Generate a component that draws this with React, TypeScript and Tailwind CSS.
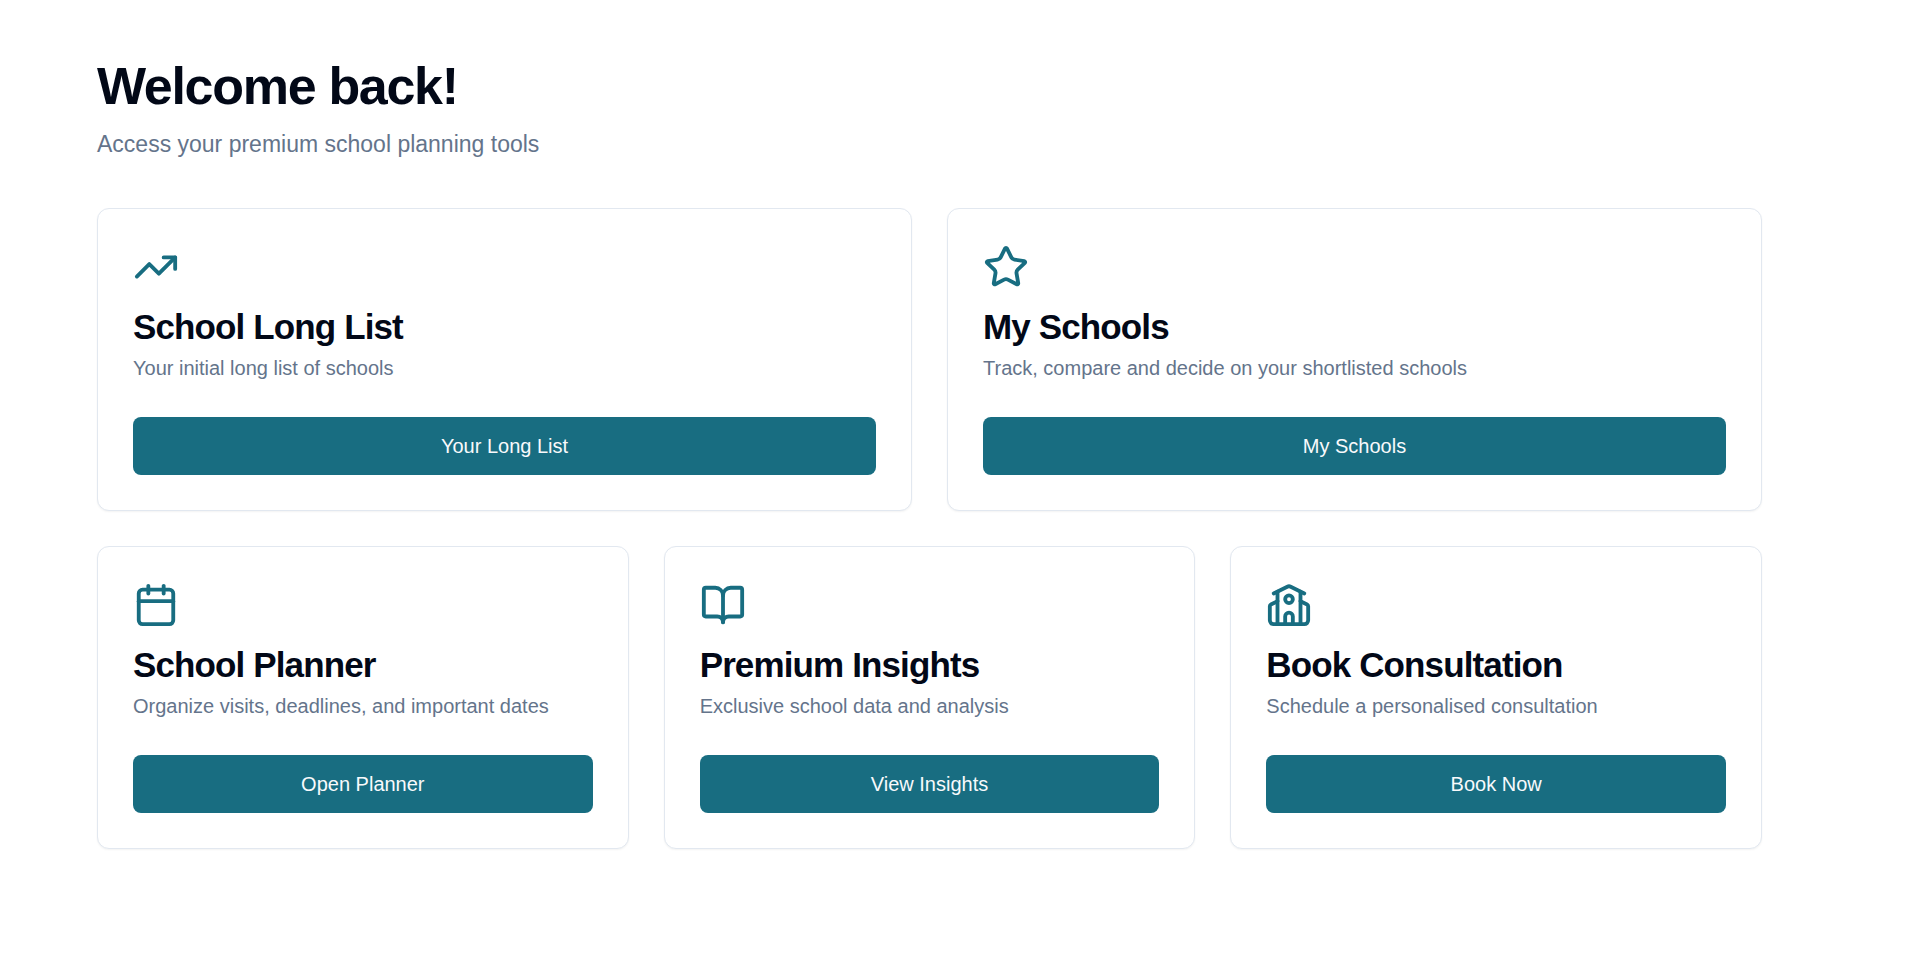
import type { ComponentType } from 'react';
import { BookOpen, Calendar, Star, TrendingUp } from 'lucide-react';

interface Tool {
  title: string;
  description: string;
  action: string;
  icon: ComponentType<{ className?: string }>;
}

function SchoolIcon({ className }: { className?: string }) {
  return (
    <svg
      className={className}
      viewBox="0 0 24 24"
      fill="none"
      stroke="currentColor"
      strokeWidth={2}
      strokeLinecap="round"
      strokeLinejoin="round"
      aria-hidden="true"
    >
      <path d="M14 22v-4a2 2 0 1 0-4 0v4" />
      <path d="m18 10 3.447 1.724a1 1 0 0 1 .553.894V20a2 2 0 0 1-2 2H4a2 2 0 0 1-2-2v-7.382a1 1 0 0 1 .553-.894L6 10" />
      <path d="M18 5v17" />
      <path d="m4 6 7.106-3.553a2 2 0 0 1 1.788 0L20 6" />
      <path d="M6 5v17" />
      <circle cx="12" cy="9" r="2" />
    </svg>
  );
}

const listTools: Tool[] = [
  { title: 'School Long List', description: 'Your initial long list of schools', action: 'Your Long List', icon: TrendingUp },
  { title: 'My Schools', description: 'Track, compare and decide on your shortlisted schools', action: 'My Schools', icon: Star },
];

const planningTools: Tool[] = [
  { title: 'School Planner', description: 'Organize visits, deadlines, and important dates', action: 'Open Planner', icon: Calendar },
  { title: 'Premium Insights', description: 'Exclusive school data and analysis', action: 'View Insights', icon: BookOpen },
  { title: 'Book Consultation', description: 'Schedule a personalised consultation', action: 'Book Now', icon: SchoolIcon },
];

function ToolCard({ tool }: { tool: Tool }) {
  const Icon = tool.icon;
  return (
    <div className="rounded-xl border border-[#e2e8f0] bg-white p-[35px] shadow-xs">
      <Icon className="w-[46px] h-[46px] mb-[19px] text-[#186d81]" />
      <h2 className="text-[35px] leading-[35px] font-semibold tracking-tight">{tool.title}</h2>
      <p className="mt-[10px] text-[20px] leading-[28px] text-[#64748b]">{tool.description}</p>
      <button
        type="button"
        className="mt-[35px] w-full h-[58px] rounded-lg bg-[#186d81] text-[20px] leading-[28px] text-[#f8fafc] hover:bg-[#186d81]/90"
      >
        {tool.action}
      </button>
    </div>
  );
}

export default function App() {
  return (
    <main className="min-h-screen bg-white pt-[57px] pb-12 pl-[97px] pr-[158px] font-['Liberation_Sans',Arial,sans-serif] text-[#020817]">
      {/* Header */}
      <div className="mb-[46px]">
        <h1 className="text-[52px] leading-[59px] font-bold tracking-tight">Welcome back!</h1>
        <p className="mt-[11px] text-[23px] leading-[35px] text-[#64748b]">Access your premium school planning tools</p>
      </div>

      <div className="grid gap-[35px] md:grid-cols-2">
        {listTools.map(tool => (
          <ToolCard key={tool.title} tool={tool} />
        ))}
      </div>

      <div className="mt-[35px] grid gap-[35px] md:grid-cols-3">
        {planningTools.map(tool => (
          <ToolCard key={tool.title} tool={tool} />
        ))}
      </div>
    </main>
  );
}
